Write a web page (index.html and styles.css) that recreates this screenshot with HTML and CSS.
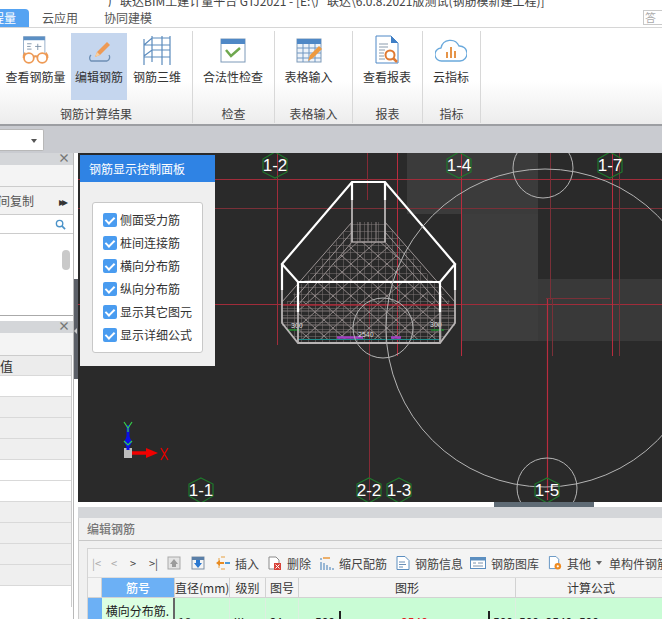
FILE: index.html
```html
<!DOCTYPE html>
<html lang="zh">
<head>
<meta charset="utf-8">
<title>编辑钢筋</title>
<link rel="stylesheet" href="styles.css">
</head>
<body>
<div class="app">
  <div class="titlebar"><span class="title-text">广联达BIM土建计量平台 GTJ2021 - [E:\广联达\6.0.8.2021版测试(钢筋模新建工程)]</span></div>
  <div class="tabs">
    <div class="tab tab-active"><span class="tab-clip">工程量</span></div>
    <div class="tab tab-cloud">云应用</div>
    <div class="tab tab-collab">协同建模</div>
    <div class="tab-help">答疑</div>
  </div>

  <div class="ribbon">
    <section class="group group-rebar">
      <div class="items">
        <div class="item item-a">
          <svg class="ico" viewBox="0 0 36 32"><rect x="4" y="1" width="24" height="22" fill="#fff" stroke="#8fa9c6"/><rect x="4" y="1" width="24" height="4" fill="#5b8fc4"/><path d="M8 9h5M8 12h4M8 15h5M17 12h7M20 9v7" stroke="#7a8fa5" fill="none"/><circle cx="10" cy="25" r="5.5" fill="#fff" stroke="#ee9a55" stroke-width="2"/><circle cx="25" cy="25" r="5.5" fill="#fff" stroke="#ee9a55" stroke-width="2"/><path d="M15 24q2.500-2 5 0M4 25q0-4 2-6M31 25q0-4-2-6" stroke="#ee9a55" stroke-width="2" fill="none"/></svg>
          <span>查看钢筋量</span>
        </div>
        <div class="item item-b item-on">
          <svg class="ico" viewBox="0 0 30 30"><path d="M7 20a4 4 0 0 0 0 6h16a4 4 0 0 0 2-6" fill="none" stroke="#6d8fb5" stroke-width="1.300"/><path d="M11 22l2-5 10-10 3 3-10 10z" fill="#ee9a55"/><path d="M11 22l2-5 3 3z" fill="#f7cf9f"/></svg>
          <span>编辑钢筋</span>
        </div>
        <div class="item item-c">
          <svg class="ico" viewBox="0 0 30 30"><path d="M2 4v26M10 1v26M20 1v29M28 1v29M2 10L10 3h18M2 10h26M2 21l8-6h18M2 22h26" fill="none" stroke="#5b8bbd" stroke-width="1.200"/></svg>
          <span>钢筋三维</span>
        </div>
      </div>
      <div class="group-label">钢筋计算结果</div>
    </section>
    <section class="group group-check">
      <div class="items">
        <div class="item item-d">
          <svg class="ico" viewBox="0 0 30 30"><rect x="3" y="4" width="24" height="23" fill="#fff" stroke="#7c99b8"/><rect x="3" y="4" width="24" height="5" fill="#4f88c6"/><path d="M8 15l5 6 9-8" fill="none" stroke="#6fa84f" stroke-width="2.500"/></svg>
          <span>合法性检查</span>
        </div>
      </div>
      <div class="group-label">检查</div>
    </section>
    <section class="group group-table">
      <div class="items">
        <div class="item item-e">
          <svg class="ico" viewBox="0 0 30 30"><rect x="3" y="4" width="24" height="23" fill="#eef3f9" stroke="#7c99b8"/><rect x="3" y="4" width="24" height="5" fill="#4f88c6"/><path d="M3 13h24M3 18h24M3 23h24M9 9v18M15 9v18M21 9v18" stroke="#6f96c2"/><path d="M14 26l2-6 9-9 3 3-9 9z" fill="#ee9a40"/></svg>
          <span>表格输入</span>
        </div>
      </div>
      <div class="group-label">表格输入</div>
    </section>
    <section class="group group-report">
      <div class="items">
        <div class="item item-f">
          <svg class="ico" viewBox="0 0 30 30"><path d="M4 1h15l7 7v20H4z" fill="#fff" stroke="#4f88c6"/><path d="M19 1l7 7h-7z" fill="#3f7fc6"/><path d="M7 9h9M7 12h9M7 15h6M7 18h5M7 21h5M7 24h6" stroke="#8a9bad"/><circle cx="18" cy="20" r="4.500" fill="#fff" stroke="#e07a33" stroke-width="2"/><path d="M21 23l4 4" stroke="#e07a33" stroke-width="2.500"/></svg>
          <span>查看报表</span>
        </div>
      </div>
      <div class="group-label">报表</div>
    </section>
    <section class="group group-index">
      <div class="items">
        <div class="item item-g">
          <svg class="ico" viewBox="0 0 32 30"><path d="M7 26a6.500 6.500 0 0 1-1-13 9.500 9.500 0 0 1 18-2 7.500 7.500 0 0 1 1 15z" fill="#fff" stroke="#6aa9dc" stroke-width="1.300"/><path d="M12 17v6M16 12v11M20 16v7" stroke="#e69448" stroke-width="2"/></svg>
          <span>云指标</span>
        </div>
      </div>
      <div class="group-label">指标</div>
    </section>
  </div>

  <div class="toolstrip">
    <div class="combo"><span class="combo-arrow"></span></div>
  </div>

  <div class="main">
    <aside class="side">
      <div class="side-head"><span class="x">×</span></div>
      <div class="side-blank"></div>
      <div class="copy-row"><span class="copy-text">楼层间复制</span><span class="more">▸▸</span></div>
      <div class="search">
        <svg class="search-ico" viewBox="0 0 12 12"><circle cx="5" cy="5" r="3.500" fill="none" stroke="#4b93c9" stroke-width="1.500"/><path d="M7.500 7.500L11 11" stroke="#4b93c9" stroke-width="1.800"/></svg>
      </div>
      <div class="list"><div class="thumb"></div></div>
      <div class="side-gap"></div>
      <div class="side-head second"><span class="x">×</span></div>
      <div class="prop-blank"></div>
      <div class="prop-table">
        <div class="prop-row prop-title"><span class="prop-clip">属性值</span></div>
        <div class="prop-row"></div>
        <div class="prop-row grey"></div>
        <div class="prop-row grey"></div>
        <div class="prop-row grey"></div>
        <div class="prop-row"></div>
        <div class="prop-row"></div>
        <div class="prop-row grey"></div>
        <div class="prop-row grey"></div>
        <div class="prop-row grey"></div>
        <div class="prop-row grey"></div>
      </div>
    </aside>
    <div class="splitter"><div class="split-handle"><span class="split-arrow"></span></div></div>

    <div class="work">
      <div class="canvas">
        <svg class="scene" viewBox="78 153 584 349">
          <defs>
            <pattern id="grid" width="7" height="7" patternUnits="userSpaceOnUse">
              <path d="M0 0H7M0 0V7" stroke="#7d7676" stroke-width="1" fill="none"/>
            </pattern>
            <pattern id="cross" width="18" height="16" patternUnits="userSpaceOnUse">
              <path d="M0 0L18 16M18 0L0 16" stroke="#8c8484" stroke-width="1" fill="none"/>
            </pattern>
          </defs>
          <rect x="407" y="153" width="131" height="61" fill="#3b3b3b"/>
          <rect x="462" y="214" width="76" height="127" fill="#3d3d3d"/>
          <rect x="538" y="279" width="124" height="62" fill="#393939"/>

          <g stroke="#a02c3a" fill="none">
            <path d="M78 179.500H662" stroke-width="1.200"/>
            <path d="M78 208.500H662" stroke="#7a3038"/>
            <path d="M78 304.500H662" stroke-width="1.100"/>
            <path d="M277.500 153V345" stroke="#a02c3a"/>
            <path d="M367.500 153V200" stroke="#842a35"/>
            <path d="M369.500 300V500" stroke="#842a35"/>
            <path d="M397.500 153V356" stroke="#b82c3e"/>
            <path d="M461.500 153V356" stroke="#b82c3e"/>
            <path d="M550.500 153V300" stroke="#7a3038"/>
            <path d="M547.500 298V500" stroke="#b82c3e" stroke-width="1.200"/>
            <path d="M552.500 298V356" stroke="#7a3038"/>
            <path d="M546 298.500H610" stroke="#7a3038"/>
            <path d="M612.500 153V356" stroke="#b82c3e"/>
            <path d="M619.500 153V356" stroke="#7a3038"/>
          </g>

          <polygon points="352,222 385,222 455,308 455,323 440,343 298,343 282,323 282,308" fill="url(#grid)"/>
          <polygon points="352,242 385,242 440,308 440,340 298,340 298,308" fill="url(#cross)"/>
          <g stroke="#9a9292" fill="none">
            <path d="M352 222L282 302M352 232L290 304M352 242L298 305M385 222L455 302M385 232L448 304M385 242L440 305"/>
            <path d="M282 311H455M282 318H455M282 325H455M298 332H440" stroke="#7f7676"/>
            <path d="M352 242H385" stroke="#a8a0a0" stroke-width="1.500"/>
            <path d="M360 222v20M368 222v20M376 222v20" stroke="#8c8484"/>
          </g>
          <path d="M282 305H455" stroke="#a02c3a" stroke-width="1.400"/>
          <path d="M298 339.500H440" stroke="#1d8a8a" stroke-width="1.200"/>
          <path d="M337 337.500H363M391 337.500H401" stroke="#a040c0" stroke-width="2.500"/>
          <path d="M340 343H388" stroke="#1f8a2f" stroke-width="1.600"/>
          <path d="M288 330H300M431 330H444" stroke="#1f8a2f" stroke-width="1.400"/>
          <text class="dim" x="291" y="328">300</text>
          <text class="dim" x="430" y="327">300</text>
          <text class="dim" x="358" y="337">2540</text>

          <g fill="none" stroke="#b8b4b4" stroke-width="1.800">
            <path d="M352 200V242M385 200V242"/>
            <path d="M282 290V323L298 343H440L455 323V290"/>
            <path d="M298 312V343M440 312V343"/>
          </g>
          <g fill="none" stroke="#fff" stroke-width="2.200">
            <path d="M352 182H385L455 264L440 282H298L282 264Z"/>
            <path d="M352 182V200M385 182V200"/>
            <path d="M282 264V290M455 264V290M298 282V312M440 282V312"/>
          </g>

          <g fill="none" stroke="#b4b4b4" stroke-width="1">
            <circle cx="545" cy="328" r="159"/>
            <circle cx="543" cy="168" r="30"/>
            <circle cx="547" cy="488" r="30"/>
            <circle cx="383" cy="328" r="30"/>
          </g>

          <g fill="none" stroke="#1f7a2c" stroke-width="1.200">
            <polygon points="275,152 287,159 287,172 275,178 263,172 263,159"/>
            <polygon points="459,152 471,159 471,172 459,178 447,172 447,159"/>
            <polygon points="610,152 622,159 622,172 610,178 598,172 598,159"/>
            <polygon points="201,478 213,484 213,496 201,503 189,496 189,484"/>
            <polygon points="369,478 381,484 381,496 369,503 357,496 357,484"/>
            <polygon points="399,478 411,484 411,496 399,503 387,496 387,484"/>
            <polygon points="547,478 559,484 559,496 547,503 535,496 535,484"/>
          </g>
          <g class="axis">
            <text x="275" y="171">1-2</text>
            <text x="459" y="171">1-4</text>
            <text x="610" y="171">1-7</text>
            <text x="201" y="496">1-1</text>
            <text x="369" y="496">2-2</text>
            <text x="399" y="496">1-3</text>
            <text x="547" y="496">1-5</text>
          </g>

          <rect x="124" y="448" width="8" height="10" fill="#bdbdbd"/>
          <path d="M128 434l-4 8 4 8 4-8z" fill="#0a10e8"/>
          <path d="M128 425v25" stroke="#0a10e8" stroke-width="3"/>
          <path d="M124 422l4 6 4-6M128 428v4M124 441l4 4 4-4" stroke="#35d04a" fill="none" stroke-width="1.200"/>
          <path d="M132 453h16" stroke="#f00000" stroke-width="3.500"/>
          <path d="M146 448l12 5-12 5z" fill="#f00000"/>
          <path d="M161 448l7 12M168 448l-7 12" stroke="#f00000" stroke-width="1.300"/>
        </svg>

        <div class="control">
          <div class="control-head">钢筋显示控制面板</div>
          <div class="control-box">
            <label class="check"><span class="tick"></span>侧面受力筋</label>
            <label class="check"><span class="tick"></span>桩间连接筋</label>
            <label class="check"><span class="tick"></span>横向分布筋</label>
            <label class="check"><span class="tick"></span>纵向分布筋</label>
            <label class="check"><span class="tick"></span>显示其它图元</label>
            <label class="check"><span class="tick"></span>显示详细公式</label>
          </div>
        </div>
      </div>

      <div class="drawer-strip"><div class="drawer-handle"></div></div>
      <div class="grey-bar"></div>
      <div class="editor">
        <div class="editor-title">编辑钢筋</div>
        <div class="editor-body">
          <div class="editor-inner">
            <div class="tools">
              <div class="pager"><span>|&lt;</span><span>&lt;</span><span class="dark">&gt;</span><span class="dark">&gt;|</span></div>
              <svg class="t-ico t-up" viewBox="0 0 14 14"><rect x="1" y="1" width="12" height="12" fill="#e4e4e4" stroke="#a9a9a9"/><path d="M7 3l4 5H9v3H5V8H3z" fill="#9c9c9c"/></svg>
              <svg class="t-ico t-down" viewBox="0 0 14 14"><rect x="1" y="1" width="12" height="12" fill="#f4f4f4" stroke="#7f8fa3"/><rect x="1" y="1" width="12" height="3" fill="#5a7fa8"/><path d="M5 4h4v3h2l-4 5-4-5h2z" fill="#2a78d0"/></svg>
              <div class="tool t-insert"><svg class="t-ico" viewBox="0 0 14 14"><path d="M5 1h4M3 2v4M3 8v4M5 13h4" stroke="#e8a040" fill="none"/><path d="M0 7l4-3v2h4v2H4v2z" fill="#e88a20"/><path d="M9 6h5v2H9z" fill="#4f9ad8"/></svg>插入</div>
              <div class="tool t-del"><svg class="t-ico" viewBox="0 0 14 14"><path d="M1 1h7l3 3v9H1z" fill="#fff" stroke="#8a8a8a"/><rect x="6" y="7" width="7" height="7" fill="#d9433a"/><path d="M7.500 8.500l4 4M11.500 8.500l-4 4" stroke="#fff"/></svg>删除</div>
              <div class="tool t-scale"><svg class="t-ico" viewBox="0 0 14 14"><path d="M1 2v2M1 6v8M4 7v7M7 9v5M10 11v3M13 12v2" stroke="#5d8fc0" stroke-width="1.200"/><path d="M3 2h7" stroke="#e88a20" stroke-width="1.300"/></svg>缩尺配筋</div>
              <div class="tool t-info"><svg class="t-ico" viewBox="0 0 14 14"><path d="M1 .5h8l4 4v9H1z" fill="#fff" stroke="#5d8fc0"/><path d="M3 6h6M3 8.500h7M3 11h4" stroke="#6b8fb5"/></svg>钢筋信息</div>
              <div class="tool t-lib"><svg class="t-ico t-wide" viewBox="0 0 16 14"><rect x=".5" y="1.500" width="15" height="11" fill="#fff" stroke="#5d8fc0"/><rect x=".5" y="1.500" width="15" height="3" fill="#5d8fc0"/><path d="M3 7h3M8 7h5M3 10h10" stroke="#7c94ad"/></svg>钢筋图库</div>
              <div class="tool t-other"><svg class="t-ico" viewBox="0 0 14 15"><path d="M1 .5h7l3 3v10H1z" fill="#fff" stroke="#5d8fc0"/><circle cx="10" cy="11" r="3.500" fill="#ee8a20"/><circle cx="10" cy="11" r="1.200" fill="#fff"/></svg>其他<span class="caret"></span></div>
              <div class="tool t-single">单构件钢筋</div>
            </div>
            <div class="grid-row grid-head">
              <div class="c c0"></div>
              <div class="c c1 blue">筋号</div>
              <div class="c c2">直径(mm)</div>
              <div class="c c3">级别</div>
              <div class="c c4">图号</div>
              <div class="c c5">图形</div>
              <div class="c c6">计算公式</div>
            </div>
            <div class="grid-row grid-data">
              <div class="c c0 rowhead"></div>
              <div class="c c1 name">横向分布筋.</div>
              <div class="c c2 val">18</div>
              <div class="c c3 val">Ⅲ</div>
              <div class="c c4 val">64</div>
              <div class="c c5 val shape"><span class="s1">500</span><span class="bar"></span><span class="s2">2540</span><span class="bar"></span><span class="s3">500</span></div>
              <div class="c c6 val">500+2540+500</div>
            </div>
          </div>
        </div>
      </div>
    </div>
  </div>
</div>
</body>
</html>
```
FILE: styles.css
```css
* { box-sizing: border-box; }
html, body { margin: 0; padding: 0; }
body {
  width: 662px;
  height: 619px;
  overflow: hidden;
  background: #fff;
  font-family: "Noto Sans CJK SC", "Liberation Sans", sans-serif;
  font-size: 12px;
  color: #333;
}
.app { width: 662px; height: 619px; display: flex; flex-direction: column; overflow: hidden; }

.titlebar { height: 9px; flex: none; overflow: hidden; padding-left: 108px; line-height: 1px; white-space: nowrap; color: #444; }
.title-text { display: inline-block; }

.tabs { height: 19px; flex: none; display: flex; align-items: stretch; position: relative; border-bottom: 1px solid #d6d6d6; }
.tab { line-height: 18px; font-size: 12px; color: #555; }
.tab-active { width: 29px; background: #55a3f2; color: #fff; border-radius: 0 4px 0 0; overflow: hidden; display: flex; justify-content: flex-end; padding-right: 13px; }
.tab-clip { flex: none; }
.tab-cloud { margin-left: 13px; }
.tab-collab { margin-left: 26px; }
.tab-help { position: absolute; right: -4px; top: 1px; width: 23px; height: 15px; border: 1px solid #c9c9c9; font-size: 11px; line-height: 13px; color: #aaa; padding-left: 1px; overflow: hidden; }

.ribbon { height: 98px; flex: none; display: flex; background: linear-gradient(#fff 55%, #ececec); border-bottom: 2px solid #9c9ea2; padding-top: 3px; }
.group { height: 92px; border-right: 1px solid #d8d8d8; display: flex; flex-direction: column; flex: none; }
.group-rebar { width: 193px; }
.group-check { width: 82px; }
.group-table { width: 78px; }
.group-report { width: 70px; }
.group-index { width: 58px; }
.items { display: flex; height: 70px; padding-top: 2px; }
.item { height: 67px; display: flex; flex-direction: column; align-items: center; padding-top: 2px; flex: none; white-space: nowrap; color: #333; }
.item span { margin-top: 3px; line-height: 18px; }
.item-a { width: 71px; }
.item-b { width: 56px; }
.item-c { width: 60px; }
.item-d { width: 80px; }
.item-e { width: 67px; }
.item-f { width: 68px; }
.item-g { width: 56px; }
.item-on { background: #c5d6ee; }
.ico { width: 32px; height: 30px; display: block; flex: none; }
.group-label { text-align: center; line-height: 18px; margin-top: 4px; color: #444; }

.toolstrip { height: 27px; flex: none; background: #c9cbd0; padding-top: 3px; }
.combo { width: 44px; height: 22px; background: #fff; border: 1px solid #b8b8b8; border-left: 0; border-radius: 0 2px 2px 0; position: relative; }
.combo-arrow { position: absolute; right: 6px; top: 9px; border: 3px solid transparent; border-top: 4px solid #555; border-bottom: 0; }

.main { flex: 1; display: flex; min-height: 0; }

.side { width: 74px; flex: none; display: flex; flex-direction: column; background: #fff; border-right: 1px solid #b9b9b9; }
.side-head { height: 12px; flex: none; background: #d4d6d9; position: relative; }
.x { position: absolute; right: 3px; top: -3px; font-size: 12px; line-height: 16px; color: #777; font-weight: 700; }
.side-blank { height: 22px; flex: none; background: #f4f4f4; border-bottom: 1px solid #ccc; }
.copy-row { height: 28px; flex: none; display: flex; align-items: center; justify-content: flex-end; background: #f2f2f2; border-bottom: 1px solid #ccc; overflow: hidden; padding-right: 3px; white-space: nowrap; color: #555; }
.copy-text { flex: none; margin-right: 25px; }
.more { flex: none; font-size: 12px; color: #333; letter-spacing: -3px; margin-right: 2px; width: 9px; }
.search { height: 19px; flex: none; background: #fff; border-bottom: 1px solid #ccc; display: flex; justify-content: flex-end; align-items: center; padding-right: 7px; }
.search-ico { width: 11px; height: 11px; display: block; }
.list { height: 82px; flex: none; background: #fff; position: relative; border-bottom: 1px solid #aaa; }
.thumb { position: absolute; left: 62px; top: 16px; width: 8px; height: 20px; border-radius: 4px; background: #c9c9c9; }
.side-gap { height: 5px; flex: none; background: #fff; }
.second { height: 12px; }
.prop-blank { height: 22px; flex: none; background: #f4f4f4; }
.prop-table { width: 72px; height: 252px; border-right: 1px solid #ccc; flex: none; background: #fff; }
.prop-row { height: 21px; border-bottom: 1px solid #d9d9d9; background: #fff; }
.grey { background: #efefef; }
.prop-title { background: #ececec; border-top: 1px solid #ccc; display: flex; justify-content: flex-end; padding-right: 58px; line-height: 19px; overflow: hidden; white-space: nowrap; font-size: 13px; }
.prop-clip { flex: none; }

.splitter { width: 4px; flex: none; background: #fff; padding-top: 126px; }
.split-handle { height: 100px; background: #5c6068; position: relative; }
.split-arrow { position: absolute; left: 0; top: 49px; border: 3px solid transparent; border-right: 3px solid #ccc; border-left: 0; }

.work { flex: 1; min-width: 0; display: flex; flex-direction: column; }
.canvas { height: 349px; flex: none; background: #2a2a2a; position: relative; overflow: hidden; }
.scene { display: block; width: 584px; height: 349px; }
.axis text { fill: #fff; font-family: "Liberation Sans", sans-serif; font-size: 17px; text-anchor: middle; }
.dim { fill: #ddd; font-family: "Liberation Sans", sans-serif; font-size: 7px; }

.control { position: absolute; left: 2px; top: 2px; width: 135px; height: 211px; background: #efefef; }
.control-head { height: 27px; background: #2f83e4; color: #fff; line-height: 27px; padding-left: 9px; }
.control-box { margin: 20px 12px 0; height: 151px; background: #fff; border: 1px solid #c8c8c8; border-radius: 3px; padding: 5px 0 0 10px; }
.check { display: flex; align-items: center; height: 23px; color: #333; white-space: nowrap; }
.tick { width: 14px; height: 14px; background: #4a9cf0; border-radius: 2px; margin-right: 3px; position: relative; flex: none; }
.tick::after { content: ""; position: absolute; left: 4px; top: 2px; width: 4px; height: 7px; border: solid #fff; border-width: 0 2px 2px 0; transform: rotate(45deg); }

.drawer-strip { height: 5px; flex: none; background: #fff; padding-left: 416px; }
.drawer-handle { width: 100px; height: 5px; background: #5f6b75; }
.grey-bar { height: 11px; flex: none; background: #d4d6d9; }
.editor { flex: 1; min-height: 0; background: #f0f0f0; border-left: 1px solid #ccc; overflow: hidden; }
.editor-title { height: 23px; line-height: 22px; padding-left: 8px; color: #777; font-weight: 500; border-bottom: 1px solid #c8c8c8; }
.editor-body { padding: 7px 0 0 8px; }
.editor-inner { width: 600px; border: 1px solid #d4d4d4; border-right: 0; background: #f4f4f4; }
.tools { height: 28px; display: flex; align-items: center; white-space: nowrap; color: #444; }
.pager { display: flex; width: 79px; padding-left: 4px; font-size: 11px; color: #aaa; flex: none; }
.pager span { width: 19px; flex: none; }
.dark { color: #444; }
.t-ico { width: 14px; height: 14px; display: block; flex: none; margin-right: 5px; }
.t-wide { width: 16px; }
.t-up { margin-right: 10px; }
.t-down { margin-right: 11px; }
.tool { display: flex; align-items: center; flex: none; margin-right: 8px; }
.t-insert { margin-right: 9px; }
.t-del { margin-right: 9px; }
.t-scale { margin-right: 9px; }
.t-info { margin-right: 7px; }
.t-lib { margin-right: 9px; }
.t-other { margin-right: 4px; }
.caret { margin-left: 5px; margin-right: 3px; border: 3px solid transparent; border-top: 4px solid #666; border-bottom: 0; }

.grid-row { display: flex; }
.grid-head { height: 21px; border-top: 1px solid #ddd; }
.c { flex: none; border-right: 1px solid #d2d2d2; text-align: center; line-height: 20px; white-space: nowrap; }
.c0 { width: 14px; }
.c1 { width: 73px; }
.c2 { width: 55px; }
.c3 { width: 36px; }
.c4 { width: 33px; }
.c5 { width: 217px; }
.c6 { width: 150px; border-right: 0; }
.blue { background: #6cb0f5; color: #fff; font-weight: 500; }
.grid-head .c { border-bottom: 1px solid #d2d2d2; }
.grid-data { height: 52px; background: #c9fcd5; }
.rowhead { background: #6cb0f5; border: 0; }
.name { background: #dcffe2; border-right: 2px solid #666; color: #222; line-height: 16px; padding-top: 5px; }
.val { padding-top: 16px; text-align: left; padding-left: 3px; color: #222; line-height: 16px; border-color: #dcefe0; }
.shape { display: flex; position: relative; padding-left: 16px; }
.s1 { width: 24px; flex: none; }
.s2 { width: 147px; flex: none; color: #d22; text-align: center; }
.s3 { width: 22px; flex: none; padding-left: 3px; }
.bar { width: 2px; height: 14px; margin-top: -3px; background: #222; flex: none; }
```
